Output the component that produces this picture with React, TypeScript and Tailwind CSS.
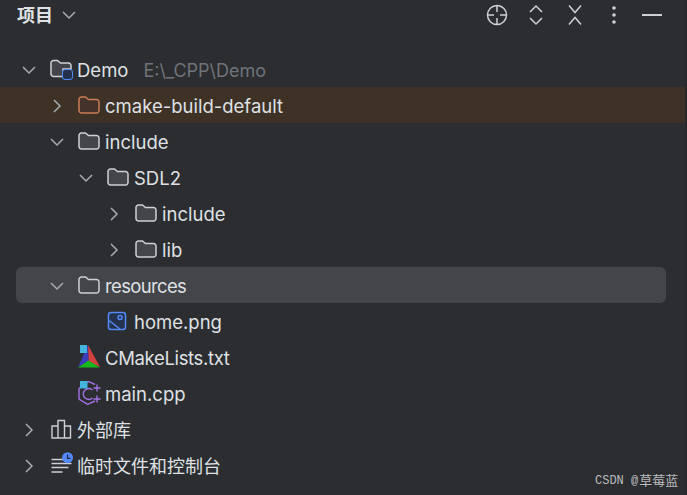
import { ReactNode } from "react";

const font = "font-['Inter','Noto_Sans_CJK_SC',sans-serif]";

function Chevron({ open }: { open: boolean }) {
  return (
    <svg className="ml-[0.500px]" width="16" height="16" viewBox="0 0 16 16" fill="none" stroke="#a8abb0" strokeWidth="1.5">
      {open ? <path d="M2 5l6 6 6-6" /> : <path d="M5 2l6 6-6 6" />}
    </svg>
  );
}

function Folder({ stroke = "#ced0d6", fill = "#43454a" }: { stroke?: string; fill?: string }) {
  return (
    <svg className="-mt-[3px] ml-px" width="22" height="20" viewBox="0 0 22 20" fill={fill} stroke={stroke} strokeWidth="1.5">
      <path d="M1 4.500A2.500 2.500 0 0 1 3.500 2H7.500L10.500 4.500H18.500A2.500 2.500 0 0 1 21 7V15.500A2.500 2.500 0 0 1 18.500 18H3.500A2.500 2.500 0 0 1 1 15.500Z" />
    </svg>
  );
}

function ModuleFolder() {
  return (
    <div className="relative -mt-[2px] ml-px h-[20px] w-[22px]">
      <svg width="22" height="20" viewBox="0 0 22 20" fill="#43454a" stroke="#ced0d6" strokeWidth="1.5">
        <path d="M1 4A2.500 2.500 0 0 1 3.500 1.500H7.500L10.500 4H18.500A2.500 2.500 0 0 1 21 6.500V10H13V17.500H3.500A2.500 2.500 0 0 1 1 15Z" />
      </svg>
      <div className="absolute left-[12px] top-[10px] h-[11px] w-[11px] rounded-[3px] border-[1.500px] border-[#548af7] bg-[#25324d]" />
    </div>
  );
}

function ImageFile() {
  return (
    <svg className="-mt-[2px] ml-px" width="20" height="20" viewBox="0 0 20 20" fill="#25324d" stroke="#548af7" strokeWidth="1.500">
      <rect x="1.500" y="1.500" width="17" height="17" rx="2.500" />
      <circle cx="13" cy="6.500" r="2" fill="none" />
      <path d="M2 9.500L13 18" fill="none" />
    </svg>
  );
}

function CMakeIcon() {
  return (
    <svg className="-mt-[4px]" width="24" height="24" viewBox="0 0 24 24">
      <path d="M11 1L23 23L11.500 17.500Z" fill="#d2403f" />
      <path d="M11 1L11.500 17.500L1 23Z" fill="#3b3db8" />
      <path d="M11.500 16.500L23 23.500H1Z" fill="#16b81e" />
      <rect x="3" y="1" width="7" height="8" fill="#45b5e0" />
    </svg>
  );
}

function CppIcon() {
  return (
    <svg className="-mt-[2px]" width="24" height="24" viewBox="0 0 24 24" fill="none" stroke="#a571e6" strokeWidth="1.400">
      <path d="M8 1.500L12 0.700L18 3.500M18 20L10.500 23.300L2 18V7.500L4 6" />
      <path d="M15.500 9A5.500 5.500 0 1 0 15.500 17" />
      <path d="M16.500 7H23.500M20 3.500V10.500M16.500 18H23.500M20 14.500V21.500" />
      <rect x="3" y="0" width="7.500" height="7.500" fill="#45b5e0" stroke="none" />
    </svg>
  );
}

function LibraryIcon() {
  return (
    <svg width="24" height="24" viewBox="0 0 24 24" fill="none" stroke="#ced0d6" strokeWidth="1.400">
      <path d="M3 20V8H9V20ZM9 20V2.500H15.500V20ZM15.500 20V8H21.500V20Z" />
    </svg>
  );
}

function ScratchIcon() {
  return (
    <svg className="overflow-visible" width="24" height="22" viewBox="0 0 24 22" fill="none" stroke="#ced0d6" strokeWidth="1.400">
      <path d="M2.500 4.500H14.500M2.500 8.500H22.500M2.500 12.500H19.500M2.500 17H13.500" />
      <circle cx="18.500" cy="2.700" r="5.500" fill="#548af7" stroke="none" />
      <path d="M18.500 -0.500V3.300H21.500" stroke="#1e2a44" strokeWidth="1.200" />
    </svg>
  );
}

type Row = {
  label: string;
  hint?: string;
  open?: boolean;
  indent: string;
  icon: ReactNode;
  bg?: string;
  text?: string;
};

const rows: Row[] = [
  { label: "Demo", hint: "E:\\_CPP\\Demo", open: true, indent: "pl-[20px]", icon: <ModuleFolder /> },
  { label: "cmake-build-default", open: false, indent: "pl-[48px]", icon: <Folder stroke="#c77d55" fill="#45322b" />, bg: "bg-[#3e3226]" },
  { label: "include", open: true, indent: "pl-[48px]", icon: <Folder /> },
  { label: "SDL2", open: true, indent: "pl-[77px]", icon: <Folder /> },
  { label: "include", open: false, indent: "pl-[105px]", icon: <Folder /> },
  { label: "lib", open: false, indent: "pl-[105px]", icon: <Folder /> },
  { label: "resources", open: true, indent: "pl-[32px]", icon: <Folder />, bg: "ml-[16px] mr-[19px] rounded-[6px] bg-[#43454a]", text: "tracking-[-0.65px]" },
  { label: "home.png", indent: "pl-[77px]", icon: <ImageFile /> },
  { label: "CMakeLists.txt", indent: "pl-[48px]", icon: <CMakeIcon />, text: "tracking-[-0.35px]" },
  { label: "main.cpp", indent: "pl-[48px]", icon: <CppIcon /> },
  { label: "外部库", open: false, indent: "pl-[20px]", icon: <LibraryIcon />, text: "!pt-0 !text-[18px]" },
  { label: "临时文件和控制台", open: false, indent: "pl-[20px]", icon: <ScratchIcon />, text: "!pt-0 !text-[18px]" },
];

function TreeRow({ row }: { row: Row }) {
  return (
    <div className={`flex h-9 items-center pt-[2px] ${row.indent} ${row.bg ?? ""}`}>
      <div className="flex w-[28.500px] shrink-0 items-center">
        {row.open !== undefined && <Chevron open={row.open} />}
      </div>
      <div className="flex w-[28.500px] shrink-0 items-center">{row.icon}</div>
      <span className={`whitespace-nowrap pt-[2px] text-[18.500px] text-[#dfe1e5] ${row.text ?? ""}`}>{row.label}</span>
      {row.hint && <span className="ml-[15px] whitespace-nowrap text-[18px] text-[#6f737a]">{row.hint}</span>}
    </div>
  );
}

export default function App() {
  return (
    <div className={`relative flex h-[495px] w-[687px] overflow-hidden bg-[#2b2d30] ${font}`}>
      <div className="flex min-w-0 flex-1 flex-col">
        <header className="flex h-[51px] items-start pl-[17px] pt-[3px]">
          <div className="flex h-[24px] items-center gap-[9px]">
            <span className="text-[18px] font-bold text-[#dfe1e5]">项目</span>
            <svg width="14" height="14" viewBox="0 0 14 14" fill="none" stroke="#a8abb0" strokeWidth="1.500">
              <path d="M1 4l6 6 6-6" />
            </svg>
          </div>
          <div className="ml-auto mr-[23px] mt-[-1px] flex h-[26px] items-center text-[#ced0d6]">
            <svg width="22" height="22" viewBox="0 0 22 22" fill="none" stroke="currentColor" strokeWidth="1.500">
              <circle cx="11" cy="11" r="9.500" />
              <path d="M11 1V8M11 14V21M1 11H8M14 11H21" />
            </svg>
            <svg className="ml-[20px]" width="16" height="22" viewBox="0 0 16 22" fill="none" stroke="currentColor" strokeWidth="1.500">
              <path d="M2 8l6-6 6 6M2 14l6 6 6-6" />
            </svg>
            <svg className="ml-[23px]" width="16" height="22" viewBox="0 0 16 22" fill="none" stroke="currentColor" strokeWidth="1.500">
              <path d="M2 1.500l6 7 6-7M2 20.500l6-7 6 7" />
            </svg>
            <svg className="ml-[29px]" width="4" height="20" viewBox="0 0 4 20" fill="currentColor">
              <circle cx="2" cy="3" r="1.800" />
              <circle cx="2" cy="10" r="1.800" />
              <circle cx="2" cy="17" r="1.800" />
            </svg>
            <div className="ml-[26px] h-[1.500px] w-[20px] bg-current" />
          </div>
        </header>
        {rows.map((row, i) => (
          <TreeRow key={i} row={row} />
        ))}
      </div>
      <div className="w-[2px] bg-[#26282b]" />
      <div className="absolute left-[595px] top-[471px] flex items-center whitespace-nowrap text-[#b9bbbf]">
        <span className="font-['Liberation_Mono',monospace] text-[12px]">CSDN @</span>
        <span className="ml-[1px] text-[13px]">草莓蓝</span>
      </div>
    </div>
  );
}
